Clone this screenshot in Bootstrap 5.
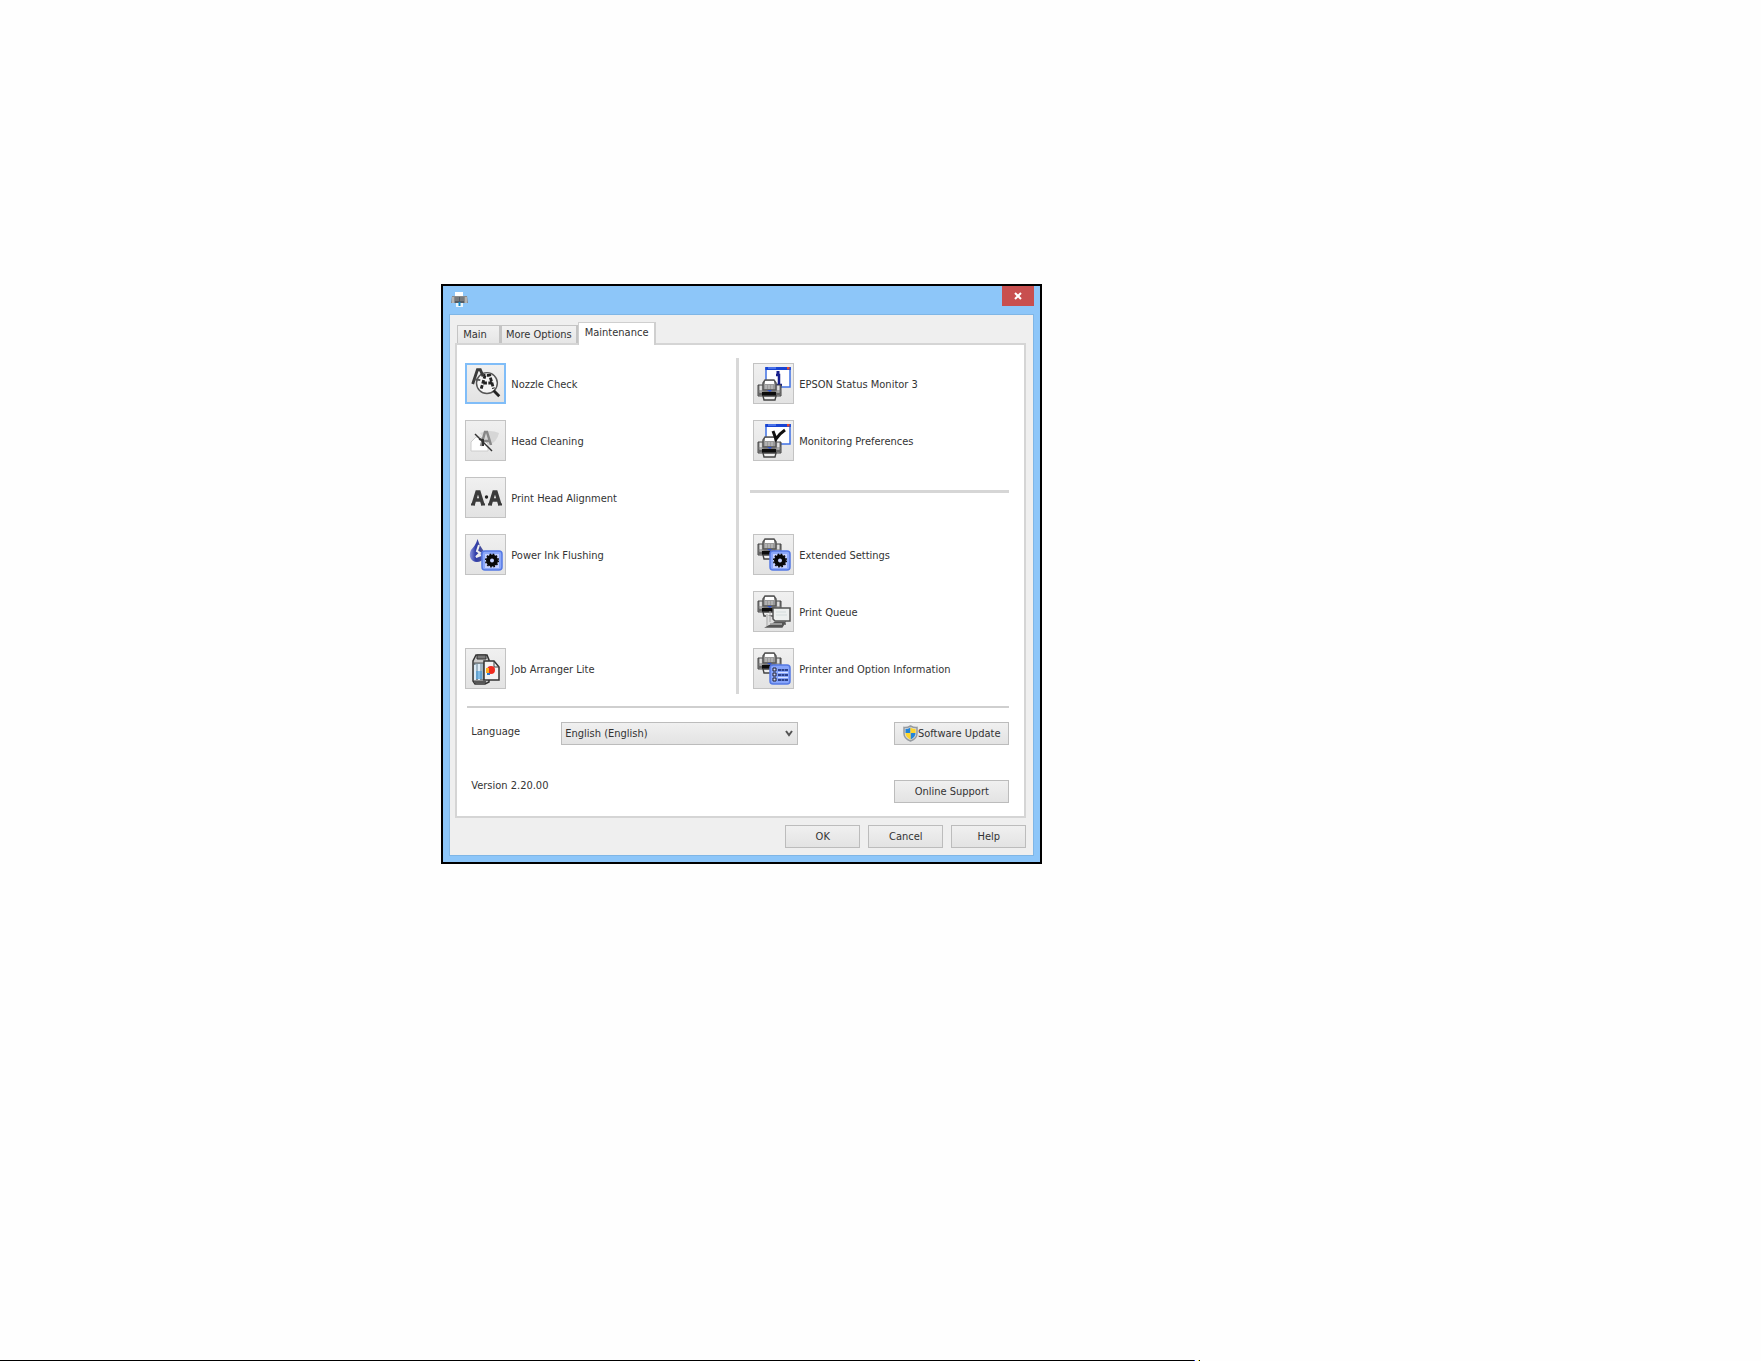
<!DOCTYPE html>
<html lang="en">
<head>
<meta charset="utf-8">
<meta name="viewport" content="width=device-width, initial-scale=1">
<title>Printer maintenance</title>
<link href="https://cdn.jsdelivr.net/npm/bootstrap@5.3.0/dist/css/bootstrap.min.css" rel="stylesheet">
<style>
body{font-family:"DejaVu Sans Condensed","DejaVu Sans","Noto Sans",sans-serif;font-stretch:condensed;font-size:11px;line-height:16px;color:#333;background:#fefefe}
.stage{padding:284px 16px 40px 25%}
.win{width:100%;max-width:601px;margin-left:1px;background:#8dc6f9;border:2px solid #000;padding:0 6px 6px}
.titlebar{height:28px}
.app-icon{margin:6px 0 0 2px}
.close-btn{width:32px;height:20px;background:#c84f4f;border:0;color:#fff}
.client{background:#efefef;border:1px solid #7fb6e6;padding:7px 7px 7px 5px}
.nav-tabs{border:0;position:relative;z-index:1}
.nav-tabs .nav-link{font-size:11px;line-height:16px;color:#333;border:1px solid #c4c4c4;border-right-width:2px;border-bottom:0;border-radius:0;background:linear-gradient(#f1f1f1,#e6e6e6);margin:0;height:18px;padding:1px 4px 0}
.nav-tabs .nav-link.active{background:#fff;height:23px;margin-bottom:-2px;padding:1px 6px 4px;border-color:#cfcfcf;color:#333}
.nav-tabs .first-tab{margin-left:2px;padding:1px 12px 0 5px}
.panel{background:#fff;border:2px solid #d5d5d5;padding:13px 15px 13px 8px}
.tools{padding:5px 0}
.tools-left{flex:0 0 271px}
.tools-right{padding-left:14px}
.v-rule{width:3px;background:#d8d8d8}
.h-rule{height:3px;background:#d6d6d6}
.bottom-rule{margin:12px 0 14px 2px;height:2px;background:#cfcfcf}
.section-cell{height:41px;margin-left:-3px;padding-top:13px}
.blank-cell{height:41px}
.list-gap{gap:16px}
.tool{border:0;background:none;padding:0;color:#333;gap:5px;text-align:left}
.tool svg{flex:none;width:41px;height:41px;border:1px solid #c3c3c3;background:linear-gradient(#f0f0f0,#e3e3e3)}
.tool.selected svg{border:2px solid #80bdf8;padding:0}
.tool span{padding-top:2px}
.push{padding:0;font-size:11px;line-height:16px;color:#333;border:1px solid #bcbcbc;border-radius:0;background:linear-gradient(#f0f0f0,#e3e3e3);height:23px}
.push:hover{border-color:#7eb4ea;color:#333}
.wide{width:115px}
.dlg{width:75px}
.lang-label{width:92px;padding:0 0 3px 6px}
.version{padding-left:6px;line-height:12px}
.lang{width:237px;height:23px;padding:0 20px 0 3px;font-size:11px;line-height:16px;color:#333;border:1px solid #bcbcbc;border-radius:0;appearance:none;background:linear-gradient(#f0f0f0,#e3e3e3)}
.lang-wrap svg{position:absolute;right:5px;top:8px;pointer-events:none}
.second-row{margin-top:35px}
.dlg-row{gap:8px;padding-top:7px}
.page-line{height:1px}
.line-main{width:67.8%;background:#000}
.line-blue{width:1px;background:#2038e0}
.line-gap{width:3px}
.line-yellow{width:1px;background:#f5ea20}
.line-end{width:1px;background:#000}
</style>
<script src="https://cdn.jsdelivr.net/npm/bootstrap@5.3.0/dist/js/bootstrap.bundle.min.js"></script>
</head>
<body class="d-flex flex-column min-vh-100">
<svg width="0" height="0" class="position-absolute" aria-hidden="true">
<defs>
<linearGradient id="steel" x1="0" x2="1"><stop offset="0" stop-color="#666"/><stop offset=".12" stop-color="#eee"/><stop offset=".26" stop-color="#888"/><stop offset=".5" stop-color="#777"/><stop offset=".72" stop-color="#777"/><stop offset=".88" stop-color="#eee"/><stop offset="1" stop-color="#555"/></linearGradient>
<linearGradient id="ink" x1="0" x2="1"><stop offset="0" stop-color="#8d97df"/><stop offset=".4" stop-color="#2f3ca8"/><stop offset="1" stop-color="#555a94"/></linearGradient>
<g id="printer">
<path d="M1 6h23v11H1z" fill="url(#steel)" stroke="#444"/>
<path d="M6 6V4l2-3h9l2 3v7H6z" fill="#999" stroke="#555" stroke-width="1.500"/>
<path d="M8 2h9v3H8z" fill="#fff"/><path d="M9 6v4M12 6v4M15 6v4" stroke="#c9c9c9"/>
<path d="M1 12h23" stroke="#777"/>
<path d="M1 15h23" stroke="#666" stroke-width="3"/>
<path d="M5 15h14" stroke="#0c0c0c" stroke-width="4"/>
<path d="M10 11h5l-2 2z" fill="#2e50d0"/>
<path d="M6 17h13l-1 4H7z" fill="#eee" stroke="#444" stroke-width="1.400"/>
</g>
<g id="pane"><rect x="13" y="5" width="24" height="19" fill="#fff" stroke="#3f70e4" stroke-width="1.500"/><path d="M12.300 5.500h25.500" stroke="#1944d2" stroke-width="3"/><path d="M15 5h8" stroke="#7fa2ff"/><rect x="34" y="4" width="2.500" height="2.500" fill="#e44b32"/></g>
<g id="gear"><rect x="17" y="17" width="20" height="19" rx="3" fill="#8ca8fa" stroke="#5478e4" stroke-width="1.500"/><rect x="20" y="20" width="14" height="14" fill="#c4d0ff"/><circle cx="27" cy="26.500" r="4" fill="#c4d0ff" stroke="#080808" stroke-width="4"/><circle cx="27" cy="26.500" r="6.300" fill="none" stroke="#080808" stroke-width="1.500" stroke-dasharray="1.650 1.650"/></g>
</defs>
</svg>
<main class="stage flex-grow-1">
<section class="win" aria-label="Printer settings">
<header class="titlebar d-flex justify-content-between align-items-start">
<svg class="app-icon" width="17" height="16" viewBox="0 0 17 16"><path d="M4 0h8v6H4z" fill="#fff"/><path d="M1 4h15l1 7H0z" fill="#8b8b8b"/><path d="M2 5v6M15 5v6" stroke="#ddd"/><path d="M4 5h9v6H4z" fill="#555c64"/><path d="M5 5v4M7 5v4M10 5v4M12 5v4" stroke="#999"/><path d="M5 11h7v4H5z" fill="#eaf4fb"/><path d="M8.500 10v4" stroke="#168ac8" stroke-width="2"/></svg>
<button class="close-btn d-flex align-items-center justify-content-center p-0" type="button" aria-label="Close"><svg width="8" height="8" viewBox="0 0 8 8"><path d="m1 1 6 6M7 1 1 7" stroke="#fff" stroke-width="2"/></svg></button>
</header>
<div class="client">
<ul class="nav nav-tabs align-items-end" role="tablist">
<li class="nav-item"><button class="nav-link first-tab" type="button" role="tab">Main</button></li>
<li class="nav-item"><button class="nav-link" type="button" role="tab">More Options</button></li>
<li class="nav-item"><button class="nav-link active" type="button" role="tab" aria-selected="true">Maintenance</button></li>
</ul>
<div class="panel">
<div class="d-flex">
<div class="tools tools-left d-flex flex-column align-items-start list-gap">
<button class="tool selected d-flex align-items-center" type="button"><svg viewBox="0 0 39 39"><circle cx="21" cy="19" r="11" fill="#f4f4f4" stroke="#555" stroke-width="1.500"/><path d="m6 20 5-15h3l3 7" fill="none" stroke="#3a3a3a" stroke-width="3"/><path d="m8 15 6 1" stroke="#555" stroke-width="2"/><path d="m15 25 4-14h5l4 14M17 19h10" fill="none" stroke="#222" stroke-width="3" stroke-dasharray="4 1.500"/><path d="m28 27 6 6" stroke="#222" stroke-width="3"/></svg><span>Nozzle Check</span></button>
<button class="tool d-flex align-items-center" type="button"><svg viewBox="0 0 39 39"><path d="M14 12q10-4 19 0-2 9-10 12z" fill="#d6d6d6"/><path d="M5 30V21l5-5h5l7 7v7z" fill="#fff" stroke="#ccc"/><path d="m15 25 4-14h2l4 13M17 20h7" fill="none" stroke="#888" stroke-width="2.500"/><path d="m9 13 17 17" stroke="#333" stroke-width="1.500"/><path d="m13 18 4 1v6" fill="none" stroke="#333" stroke-width="2"/></svg><span>Head Cleaning</span></button>
<button class="tool d-flex align-items-center" type="button"><svg viewBox="0 0 39 39"><g fill="none" stroke="#3b3b3b" stroke-width="3.500"><path d="m7 27 4-13h2l4 13M8 22h8"/><path d="m24 27 4-13h2l4 13M25 22h8"/></g><path d="M5 26.500h4M15 26.500h4M22 26.500h4M32 26.500h4" stroke="#3b3b3b" stroke-width="2"/><circle cx="20.500" cy="19" r="1.700" fill="#222"/></svg><span>Print Head Alignment</span></button>
<button class="tool d-flex align-items-center" type="button"><svg viewBox="0 0 39 39"><path d="M11.500 4Q13 10 17 15c4 6 0 12-6 12s-9-6-6-12Q10 10 11.500 4z" fill="url(#ink)"/><path d="m13 10-2 6 3 2-4 4 5-2" fill="none" stroke="#eee" stroke-width="2"/><use href="#gear" x="-1" y="-1"/></svg><span>Power Ink Flushing</span></button>
<div class="blank-cell"></div>
<button class="tool d-flex align-items-center" type="button"><svg viewBox="0 0 39 39"><path d="M10 6h11l2 5v22l-4 2H9l-2-3V12z" fill="#ccc" stroke="#333" stroke-width="1.500"/><path d="M11 6h9v4h-9z" fill="#777" stroke="#333"/><path d="M8 14h10v17H8z" fill="#9fb4c2" stroke="#555"/><path d="M9 16v15M13 15v16" stroke="#dceaf5" stroke-width="2"/><path d="M10 22h6v8h-6z" fill="#3a96d9" opacity=".6"/><path d="M8 33h12" stroke="#555" stroke-width="2"/><path d="M18 12h10l5 6v13H18z" fill="#f2f2f2" stroke="#333" stroke-width="1.500"/><path d="M28 12v6h5" fill="none" stroke="#444"/><circle cx="25" cy="21" r="4" fill="#ee2a1e"/><path d="M20 19h3v5h-3z" fill="#ffae20"/><path d="M21 24h3v2h-3z" fill="#2878ce"/></svg><span>Job Arranger Lite</span></button>
</div>
<div class="v-rule"></div>
<div class="tools tools-right flex-grow-1 d-flex flex-column list-gap">
<button class="tool d-flex align-items-center" type="button"><svg viewBox="0 0 39 39"><use href="#pane" x="-1" y="-1"/><path d="M22 11h3v10m-3 0h6" fill="none" stroke="#18208c" stroke-width="2.500"/><path d="M24 7v3" stroke="#18208c" stroke-width="3"/><use href="#printer" x="3" y="15"/></svg><span>EPSON Status Monitor 3</span></button>
<button class="tool d-flex align-items-center" type="button"><svg viewBox="0 0 39 39"><use href="#pane" x="-1" y="-1"/><use href="#printer" x="3" y="15"/><path d="m19 10 3 8q3-5 9-9" fill="none" stroke="#111" stroke-width="3"/></svg><span>Monitoring Preferences</span></button>
<div class="section-cell"><div class="h-rule"></div></div>
<button class="tool d-flex align-items-center" type="button"><svg viewBox="0 0 39 39"><use href="#printer" x="3" y="3"/><use href="#gear" x="-1" y="-1"/></svg><span>Extended Settings</span></button>
<button class="tool d-flex align-items-center" type="button"><svg viewBox="0 0 39 39"><use href="#printer" x="3" y="3"/><path d="M12 22v13h16v-5z" fill="#ddd"/><path d="M13 35h15l3-5h-9zM16 32h16" fill="#555" stroke="#555" stroke-width="1.500"/><path d="M14 32h14M17 29h14" stroke="#ddd"/><path d="M16 19v11M13 22v12" stroke="#aaa"/><path d="M19 16h17v13H21l-2-2z" fill="#edf0ef" stroke="#555" stroke-width="1.500"/><path d="M22 20h10M22 23h11" stroke="#d4dddd"/></svg><span>Print Queue</span></button>
<button class="tool d-flex align-items-center" type="button"><svg viewBox="0 0 39 39"><use href="#printer" x="3" y="3"/><rect x="16" y="16" width="20" height="19" rx="3" fill="#86a4fa" stroke="#5478e4" stroke-width="1.500"/><path d="M19 19h3v3h-3zM19 24h3v3h-3zM19 29h3v3h-3z" fill="#ccd6ff" stroke="#223" /><path d="M24 21h10M24 26h10M24 31h10" stroke="#112268" stroke-width="1.500" stroke-dasharray="3 .5"/><path d="M24 23.500h10M24 28.500h10" stroke="#d9e2ff"/></svg><span>Printer and Option Information</span></button>
</div>
</div>
<div class="bottom-rule"></div>
<div class="d-flex align-items-center">
<label class="lang-label me-1" for="lang">Language</label>
<div class="lang-wrap position-relative"><select class="lang" id="lang"><option>English (English)</option></select><svg width="8" height="7" viewBox="0 0 8 7" aria-hidden="true"><path d="m1 1 3 4 3-4" fill="none" stroke="#555" stroke-width="2"/></svg></div>
<button class="btn push wide ms-auto d-flex align-items-center justify-content-center" type="button"><svg width="15" height="17" viewBox="0 0 15 17"><path d="M7.500 1Q11 3 14 2.500v6q0 5-6.500 7.500Q1 13.500 1 8.500v-6Q4 3 7.500 1z" fill="#ddd" stroke="#969ba0" stroke-width="1.500"/><path d="M7.500 2.500V8H2.500V4Q5 4 7.500 2.500zM7.500 8h5q0 4-5 6.500z" fill="#2584d8"/><path d="M7.500 2.500V8h5V4Q10 4 7.500 2.500zM7.500 8h-5q0 4 5 6.500z" fill="#ffd52b"/></svg>Software Update</button>
</div>
<div class="second-row d-flex justify-content-between align-items-start">
<span class="version">Version 2.20.00</span>
<button class="btn push wide" type="button">Online Support</button>
</div>
</div>
<div class="dlg-row d-flex justify-content-end">
<button class="btn push dlg" type="button">OK</button>
<button class="btn push dlg" type="button">Cancel</button>
<button class="btn push dlg" type="button">Help</button>
</div>
</div>
</section>
</main>
<div class="page-line d-flex"><div class="line-main"></div><div class="line-blue"></div><div class="line-gap"></div><div class="line-yellow"></div><div class="line-end"></div></div>
</body>
</html>
